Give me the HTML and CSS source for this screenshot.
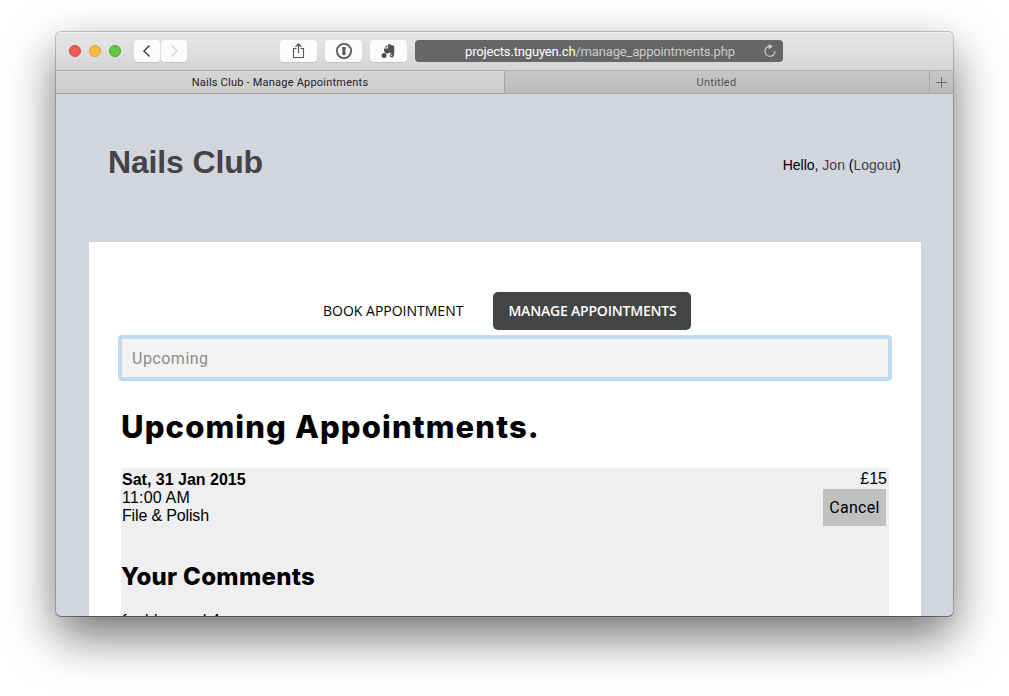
FILE: index.html
```html
<!DOCTYPE html>
<html lang="en">
<head>
<meta charset="utf-8">
<title>Nails Club - Manage Appointments</title>
<link rel="stylesheet" href="styles.css">
</head>
<body>
<div class="window">
  <header class="toolbar">
    <div class="lights"><i class="light red"></i><i class="light yellow"></i><i class="light green"></i></div>
    <div class="history">
      <button class="tool nav"><svg width="26" height="22" viewBox="0 0 26 22"><path d="M15.5 5.5 10 11l5.5 5.5" fill="none" stroke="#4c4c4c" stroke-width="1.6"/></svg></button>
      <button class="tool nav"><svg width="26" height="22" viewBox="0 0 26 22"><path d="M10.5 5.5 16 11l-5.5 5.5" fill="none" stroke="#d6d6d6" stroke-width="1.4"/></svg></button>
    </div>
    <div class="actions">
      <button class="tool"><svg width="37" height="22" viewBox="0 0 37 22"><path d="M16.5 8.500h-3v9h10v-9h-3M18.500 13V3.800M15.500 6.800l3-3 3 3" fill="none" stroke="#555" stroke-width="1.100"/></svg></button>
      <button class="tool"><svg width="37" height="22" viewBox="0 0 37 22"><circle cx="19" cy="11" r="7.100" fill="none" stroke="#555" stroke-width="1.800"/><path d="M17.300 7h3.200v3.300l-.5.700.5.700V15h-3.200v-3.300l.5-.7-.5-.7z" fill="#555"/></svg></button>
      <button class="tool"><svg width="37" height="22" viewBox="0 0 37 22"><path d="M14.500 7.600 17.200 5v2.600zM18 4.600c1.800-.6 2.800-.2 3.200.6l2.300.4c.7.200.8 1.400.8 4.400 0 3.500-.2 6.500-1.400 7.200-1.200.5-3.300.2-3.300-1.400 0-1.400 1-1.900 2.300-1.700v1c-.8-.1-1.200.2-1.200.7 0 .7 1.300.7 1.500-.2.200-1.200-.1-2.100-.9-2.100-1.300 0-1.500-.5-1.900-1.300-.5 1.400-2.200 1.300-3.800 1-1.200-.4-1.700-2.200-1.600-4.600H17c.8 0 1-.3 1-1z" fill="#505050"/><circle cx="14" cy="15.500" r="2.500" fill="#505050"/></svg></button>
    </div>
    <div class="address">
      <span class="url"><b>projects.tnguyen.ch</b>/manage_appointments.php</span>
      <svg class="reload" width="14" height="14" viewBox="0 0 14 14"><path d="M6.200 2.300a5 5 0 1 0 5.800 5" fill="none" stroke="#d0d0d0" stroke-width="1.200"/><path d="M5.700 0 10 2.400 5.700 4.900z" fill="#d0d0d0"/></svg>
    </div>
  </header>
  <nav class="tabs">
    <div class="tab current"><span class="tab-a">Nails Club - Manage Appointments</span></div>
    <div class="tab"><span class="tab-b">Untitled</span></div>
    <div class="new-tab"><svg width="11" height="11" viewBox="0 0 11 11"><path d="M5.500 0v11M0 5.500h11" stroke="#6c6c6c"/></svg></div>
  </nav>
  <main class="page">
    <div class="masthead">
      <h1 class="brand">Nails Club</h1>
      <p class="greeting">Hello, <a>Jon</a> (<a>Logout</a>)</p>
    </div>
    <section class="panel">
      <div class="menu">
        <a class="item">BOOK APPOINTMENT</a>
        <a class="item selected">MANAGE APPOINTMENTS</a>
      </div>
      <div class="filter"><span>Upcoming</span></div>
      <h2 class="heading">Upcoming Appointments.</h2>
      <article class="appointment">
        <div class="row">
          <div class="details"><b class="date">Sat, 31 Jan 2015</b><span class="time">11:00 AM</span><span class="service">File &amp; Polish</span></div>
          <div class="price"><span>£15</span><button class="cancel">Cancel</button></div>
        </div>
        <h3 class="subheading">Your Comments</h3>
        <p class="comment">for blue and 4</p>
      </article>
    </section>
  </main>
</div>
</body>
</html>
```
FILE: styles.css
```css
* { box-sizing: border-box; }
body {
  margin: 0;
  height: 696px;
  padding: 32px 0 0 56px;
  overflow: hidden;
  background: #fff;
  font: 16px/18px "Liberation Sans", Arial, sans-serif;
  color: #000;
}
h1, h2, h3, p { margin: 0; }
button { border: 0; padding: 0; }
svg { display: block; }
.window {
  width: 897px;
  height: 584px;
  overflow: hidden;
  border-radius: 5px;
  background: #d2d5dd;
  box-shadow: 0 0 0 1px rgba(0,0,0,.2), 0 1px 0 rgba(0,0,0,.25), 0 20px 48px rgba(0,0,0,.56);
}
.toolbar {
  display: flex;
  height: 39px;
  padding: 8px 0 0 13px;
  border-bottom: 1px solid #b1b1b1;
  background: linear-gradient(#e7e7e7, #d5d5d5);
  box-shadow: inset 0 1px #f3f3f3;
}
.lights { display: flex; gap: 8px; padding-top: 5px; width: 65px; }
.light { width: 12px; height: 12px; border-radius: 50%; border: 1px solid; }
.red { background: #ee5b55; border-color: #dd4b47; }
.yellow { background: #f6be40; border-color: #dfa02f; }
.green { background: #61c942; border-color: #4bac30; }
.history { display: flex; gap: 1px; width: 146px; }
.actions { display: flex; gap: 8px; width: 135px; }
.tool {
  width: 37px;
  height: 22px;
  border-radius: 4px;
  background: #fcfcfc;
  box-shadow: 0 1px 0 #c4c4c4;
}
.nav { width: 26px; }
.address {
  display: flex;
  align-items: center;
  justify-content: space-between;
  width: 368px;
  height: 22px;
  padding: 0 6px 0 50px;
  border-radius: 4px;
  background: #666;
}
.url { padding-top: 1px; font: 13px/21px Roboto, sans-serif; color: #cacaca; white-space: nowrap; letter-spacing: -.17px; }
.url b { font-weight: 400; color: #fff; }
.tabs {
  display: flex;
  height: 23px;
  border-bottom: 1px solid #a6a6a6;
  background: linear-gradient(#c6c6c6, #bbb);
  font: 11px/24px Roboto, sans-serif;
  text-align: center;
}
.tab { width: 424px; color: #555; }
.tab.current {
  width: 449px;
  border-right: 1px solid #a6a6a6;
  background: linear-gradient(#d5d5d5, #cdcdcd);
  color: #222;
}
.tab-a { letter-spacing: .22px; }
.tab-b { letter-spacing: .25px; margin-right: 1px; }
.new-tab { width: 24px; padding: 6px 0 0 6px; border-left: 1px solid #a6a6a6; }
.page { padding: 0 32px 0 33px; }
.masthead { display: flex; justify-content: space-between; height: 148px; padding: 50px 20px 0 19px; }
.brand { font-size: 32px; line-height: 36px; letter-spacing: -.15px; color: #444; }
.greeting { padding-top: 13px; font-size: 14px; line-height: 16px; }
.greeting a { color: #444; }
.panel { height: 400px; padding: 50px 32px 0; background: #fff; }
.menu { display: flex; height: 43px; padding-left: 187px; }
.item {
  height: 38px;
  padding: 0 15px;
  border-radius: 5px;
  font: 14px/38px "Open Sans", sans-serif;
  white-space: nowrap;
}
.item.selected { margin-left: 15px; width: 198px; background: #444; color: #fff; font-weight: 600; letter-spacing: -.2px; }
.filter {
  height: 46px;
  margin: 0 -3px;
  border: 3px solid #bddcfa;
  border-radius: 4px;
  background: #f3f3f3;
  box-shadow: inset 0 0 0 1px #d5d5d5;
  padding: 1px 0 0 11px;
  font: 16px/40px Roboto, sans-serif;
  letter-spacing: .5px;
  color: #8c8c8c;
}
.heading { margin-top: 26px; font: 800 31px/40px Inter, sans-serif; letter-spacing: 1.13px; white-space: nowrap; }
.appointment { margin-top: 21px; height: 200px; padding: 1px 2px 0 1px; background: #efeff1; }
.row { display: flex; justify-content: space-between; height: 88px; }
.details { display: flex; flex-direction: column; padding-top: 2px; }
.time { letter-spacing: .2px; }
.service { letter-spacing: -.15px; }
.price { display: flex; flex-direction: column; align-items: flex-end; padding-top: 1px; }
.cancel {
  width: 63px;
  height: 37px;
  margin: 1px 1px 0 0;
  background: #c0c0c0;
  font: 16px/37px Roboto, sans-serif;
  letter-spacing: .3px;
}
.subheading { margin-left: -1px; font: 800 24px/40px Inter, sans-serif; letter-spacing: .3px; }
.comment { margin-top: 15px; }
```
